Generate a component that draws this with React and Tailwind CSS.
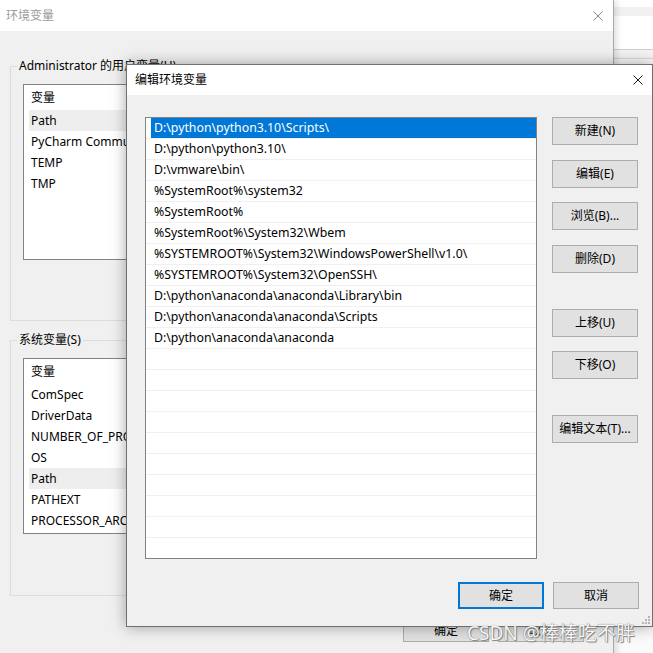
import React from "react";

function CloseX({ color }) {
  return (
    <svg width="10" height="10" viewBox="0 0 10 10" className="block">
      <path d="M0.5 0.5 L9.5 9.5 M9.5 0.5 L0.5 9.5" stroke={color} strokeWidth="1" fill="none" />
    </svg>
  );
}

function Grip() {
  return (
    <svg width="8" height="8" viewBox="0 0 8 8" className="block">
      <rect x="6" y="0" width="2" height="2" fill="#b4b4b4" />
      <rect x="3" y="3" width="2" height="2" fill="#b4b4b4" />
      <rect x="6" y="3" width="2" height="2" fill="#b4b4b4" />
      <rect x="0" y="6" width="2" height="2" fill="#b4b4b4" />
      <rect x="3" y="6" width="2" height="2" fill="#b4b4b4" />
      <rect x="6" y="6" width="2" height="2" fill="#b4b4b4" />
    </svg>
  );
}

function VarList({ items, selected }) {
  return (
    <div className="h-[176px] border border-[#828282] bg-white overflow-hidden">
      <div className="h-[25px] flex items-center pl-[7px] leading-none">变量</div>
      {items.map((t) => (
        <div key={t} className="h-[21px] flex pl-[5px]">
          <div
            className={
              t === selected
                ? "flex-1 flex items-center pl-[2px] bg-[#eeeeee] whitespace-nowrap"
                : "flex-1 flex items-center pl-[2px] whitespace-nowrap"
            }
          >
            {t}
          </div>
        </div>
      ))}
    </div>
  );
}

function BackgroundWindow() {
  return (
    <div className="w-[614px] h-[660px] shrink-0 flex flex-col border-r border-[#a8a8a8] shadow-[3px_0_6px_rgba(0,0,0,0.12)] relative z-10">
      <div className="h-[31px] bg-white flex items-center justify-between pl-[6px] pr-[10px]">
        <span className="text-[#9b9b9b] leading-none">环境变量</span>
        <CloseX color="#8a8a8a" />
      </div>
      <div className="flex-1 bg-[#f0f0f0] px-[10px]">
        <fieldset className="mt-[27px] border border-[#dcdcdc] px-[12px] pt-[10px] pb-[60px] min-w-0">
          <legend className="ml-[-6px] px-[2px] leading-[16px]">Administrator 的用户变量(U)</legend>
          <VarList items={["Path", "PyCharm Community Edition", "TEMP", "TMP"]} selected="Path" />
        </fieldset>
        <fieldset className="mt-[11px] border border-[#dcdcdc] px-[12px] pt-[10px] pb-[61px] min-w-0">
          <legend className="ml-[-6px] px-[2px] leading-[16px]">系统变量(S)</legend>
          <VarList
            items={["ComSpec", "DriverData", "NUMBER_OF_PROCESSORS", "OS", "Path", "PATHEXT", "PROCESSOR_ARCHITECTURE"]}
            selected="Path"
          />
        </fieldset>
        <div className="mt-[23px] ml-[393px] flex gap-[9px]">
          <div className="w-[86px] h-[23px] border border-[#adadad] bg-[#e1e1e1] flex items-center justify-center">确定</div>
          <div className="w-[86px] h-[23px] border border-[#adadad] bg-[#e1e1e1] flex items-center justify-center">取消</div>
        </div>
      </div>
    </div>
  );
}

function RightStrip() {
  return (
    <div className="flex-1 flex flex-col bg-white">
      <div className="h-[7px] bg-white" />
      <div className="h-[9px] bg-[#f1f1f1]" />
      <div className="h-[33px] bg-white" />
      <div className="h-[1px] bg-[#cfcfcf]" />
      <div className="h-[8px] bg-[#f3f3f3]" />
      <div className="h-[1px] bg-[#dadada]" />
      <div className="flex-1 bg-[#fafafa]" />
    </div>
  );
}

const paths = [
  "D:\\python\\python3.10\\Scripts\\",
  "D:\\python\\python3.10\\",
  "D:\\vmware\\bin\\",
  "%SystemRoot%\\system32",
  "%SystemRoot%",
  "%SystemRoot%\\System32\\Wbem",
  "%SYSTEMROOT%\\System32\\WindowsPowerShell\\v1.0\\",
  "%SYSTEMROOT%\\System32\\OpenSSH\\",
  "D:\\python\\anaconda\\anaconda\\Library\\bin",
  "D:\\python\\anaconda\\anaconda\\Scripts",
  "D:\\python\\anaconda\\anaconda",
];

function Btn({ children, className }) {
  return (
    <div className={"w-[86px] h-[28px] border border-[#adadad] bg-[#e1e1e1] flex items-center justify-center leading-none " + (className || "")}>
      {children}
    </div>
  );
}

function EditDialog() {
  const rows = [...paths, ...Array(10).fill("")];
  return (
    <div className="absolute left-[126px] top-[64px] w-[527px] h-[563px] border border-[#707070] bg-[#f0f0f0] shadow-[0_0_14px_rgba(0,0,0,0.35)] flex flex-col z-20">
      <div className="h-[30px] bg-white flex items-center justify-between pl-[8px] pr-[9px]">
        <span className="leading-none">编辑环境变量</span>
        <CloseX color="#1a1a1a" />
      </div>
      <div className="flex-1 flex flex-col pl-[18px] pt-[22px] relative">
        <div className="flex">
          <div className="w-[392px] h-[442px] border border-[#828282] bg-white overflow-hidden text-[12.3px]">
            {rows.map((t, i) => (
              <div key={i} className="h-[21px] border-b border-[#f0f0f0] flex pl-[5px]">
                <div
                  className={
                    i === 0
                      ? "flex-1 flex items-center pl-[3px] pt-[1px] bg-[#0078d7] text-white whitespace-nowrap"
                      : "flex-1 flex items-center pl-[3px] pt-[1px] whitespace-nowrap"
                  }
                >
                  {t}
                </div>
              </div>
            ))}
          </div>
          <div className="ml-[15px] flex flex-col">
            <Btn>新建(N)</Btn>
            <Btn className="mt-[15px]">编辑(E)</Btn>
            <Btn className="mt-[14px]">浏览(B)...</Btn>
            <Btn className="mt-[15px]">删除(D)</Btn>
            <Btn className="mt-[36px]">上移(U)</Btn>
            <Btn className="mt-[14px]">下移(O)</Btn>
            <Btn className="mt-[36px]">编辑文本(T)...</Btn>
          </div>
        </div>
        <div className="mt-[23px] flex justify-end gap-[9px] pr-[13px]">
          <div className="w-[86px] h-[27px] border-2 border-[#0078d7] bg-[#e1e1e1] flex items-center justify-center leading-none">确定</div>
          <div className="w-[86px] h-[27px] border border-[#adadad] bg-[#e1e1e1] flex items-center justify-center leading-none">取消</div>
        </div>
        <div className="absolute right-[2px] bottom-[2px]">
          <Grip />
        </div>
      </div>
    </div>
  );
}

export default function App() {
  return (
    <div className="relative w-[653px] h-[653px] overflow-hidden bg-white text-[12px] text-black font-['Noto_Sans','Noto_Sans_CJK_SC',sans-serif]">
      <div className="flex h-full">
        <BackgroundWindow />
        <RightStrip />
      </div>
      <EditDialog />
      <div className="absolute left-[467px] top-[623px] z-30 text-[19px] leading-[20px] text-[#f7f7f7] whitespace-nowrap [text-shadow:0_0_1px_#555,1px_1px_1px_#888]">
        CSDN @棒棒吃不胖
      </div>
    </div>
  );
}
